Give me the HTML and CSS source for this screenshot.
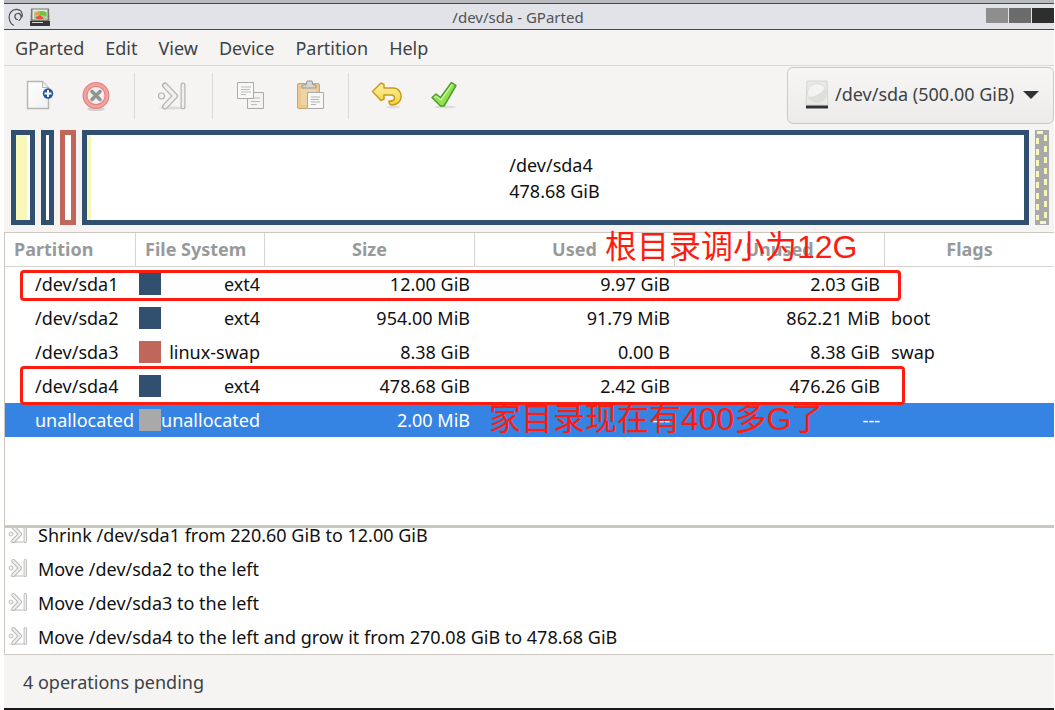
FILE: index.html
```
<!DOCTYPE html>
<html lang="en">
<head>
<meta charset="utf-8">
<title>/dev/sda - GParted</title>
<link rel="stylesheet" href="styles.css">
</head>
<body>
<svg class="defs" aria-hidden="true">
  <defs>
    <linearGradient id="paper" x1="0" y1="0" x2="1" y2="1"><stop offset="0" stop-color="#fff"/><stop offset="1" stop-color="#f0f0f0"/></linearGradient>
    <linearGradient id="gold" x1="0" y1="0" x2="0" y2="1"><stop offset="0" stop-color="#fdf3ab"/><stop offset="1" stop-color="#f3d336"/></linearGradient>
    <symbol id="move" viewBox="0 0 30 30">
      <ellipse cx="15" cy="27" rx="13" ry="1.500" fill="#dcdbd9"/>
      <g fill="none" stroke-linecap="round" stroke-linejoin="round">
        <path d="M8 4.500L18 15L8 25.500" stroke="#b4b4b2" stroke-width="6"/>
        <path d="M8 4.500L18 15L8 25.500" stroke="#efefee" stroke-width="3.400"/>
        <path d="M26 4v22" stroke="#b4b4b2" stroke-width="5"/>
        <path d="M26 4v22" stroke="#efefee" stroke-width="2.600"/>
      </g>
      <circle cx="4.500" cy="15" r="3" fill="#f2f2f1" stroke="#b4b4b2" stroke-width="1.200"/>
    </symbol>
  </defs>
</svg>
<div class="window">
  <header class="titlebar">
    <svg class="swirl" width="16" height="18" viewBox="0 0 16 18" fill="none" stroke="#4c4f52" stroke-linecap="round"><path d="M9.500 11.500C6 11 6 6 9.500 5.500c4-.5 5 5 1.500 7M14 9C15 4 12 1 8 1.300 3 1.700.8 6 1.200 10c.4 3.500 2 6 4.300 7.200" stroke-width="1.200"/></svg>
    <svg width="20" height="18" viewBox="0 0 20 18"><path d="M1 .5h18l.5 13H.5z" fill="#777b72"/><path d="M2.500 1.500h15v10h-15z" fill="#e8ebdf"/><path d="M4 3.500h13v8H4z" fill="#b5c9a0"/><path d="M10 7V3.500C13 2 17 4 16.500 8z" fill="#63c936"/><path d="M10 7H5c0-2 2-4 5-4z" fill="#ee9b4d"/><path d="M10 7l4 3.500c-3 1.500-7 1-9-1z" fill="#e64f43"/><path d="M0 13h20v5H0z" fill="#343638"/><path d="M2 14.500h11" stroke="#d2d4d2"/></svg>
    <h1>/dev/sda - GParted</h1>
    <div class="controls">
      <button class="min" aria-label="Minimize"></button><button class="max" aria-label="Maximize"></button><button class="close" aria-label="Close"></button>
    </div>
  </header>

  <nav class="menubar">
    <button>GParted</button><button>Edit</button><button>View</button><button>Device</button><button>Partition</button><button>Help</button>
  </nav>

  <div class="toolbar">
    <div class="tools">
      <button aria-label="New"><svg width="30" height="32" viewBox="0 0 30 32"><path d="M3.500 1.500h15l6 6v21h-21z" fill="url(#paper)" stroke="#b5b5b3" stroke-width="1.400"/><path d="M18.500 1.500v6h6" fill="#eee" stroke="#b5b5b3"/><circle cx="24" cy="13.500" r="5.200" fill="#2458a0"/><path d="M24 10v7M20.500 13.500h7" stroke="#fff" stroke-width="1.800"/></svg></button>
      <button aria-label="Delete"><svg width="30" height="32" viewBox="0 0 30 32"><ellipse cx="15" cy="29" rx="9" ry="2" fill="#d3d1cf"/><circle cx="15" cy="15.500" r="11" fill="#f1efee" stroke="#e58583" stroke-width="5"/><circle cx="15" cy="15.500" r="11" fill="none" stroke="#f1a3a0" stroke-width="2.500"/><path d="M11 11.500l8 8m0-8l-8 8" stroke="#929492" stroke-width="3.600" stroke-linecap="round"/></svg></button>
    </div>
    <div class="tools">
      <button aria-label="Resize/Move"><svg width="30" height="30"><use href="#move"/></svg></button>
    </div>
    <div class="tools">
      <button aria-label="Copy"><svg width="30" height="32" viewBox="0 0 30 32" stroke="#a9aaa9"><path d="M12.500 12.500h16v16h-16z" fill="#f3f3f2"/><path d="M19 18h6M16 21.500h9M16 24.500h6" stroke="#bbb"/><path d="M2.500 2.500h16v16h-16z" fill="#f8f8f7"/><path d="M6 7h10M6 9.500h9M6 12h10M6 14.500h5" stroke="#bbb"/></svg></button>
      <button aria-label="Paste"><svg width="30" height="32" viewBox="0 0 30 32"><rect x="2.500" y="3.500" width="22" height="25" rx="1.500" fill="#ecc990" stroke="#caa66e"/><path d="M6 6h15v19H6z" fill="#edd3a6"/><path d="M7 8V5h4l1-4h5l1 4h3v3z" fill="#d4d5d4" stroke="#979997"/><path d="M12.500 12.500h16v16h-16z" fill="#f7f7f6" stroke="#a9aaa9"/><path d="M16 17h9M16 19.500h8M16 22h9M16 24.500h5" stroke="#b5b5b5"/></svg></button>
    </div>
    <div class="tools">
      <button aria-label="Undo"><svg width="32" height="32" viewBox="0 0 32 32"><ellipse cx="22" cy="27" rx="7" ry="1.500" fill="#e0dfdd"/><path d="M1.500 11.500L10 3l3 1.500V8h9c11 0 11 17-1 17-2 0-3-1-3-4 7 1 7-6 2-6h-7v4l-3 1.500z" fill="url(#gold)" stroke="#c59b22" stroke-width="1.500" stroke-linejoin="round"/></svg></button>
      <button aria-label="Apply"><svg width="30" height="32" viewBox="0 0 30 32"><ellipse cx="16" cy="27" rx="11" ry="1.500" fill="#dddcda"/><path d="M3 17.500l4-3.500 4.500 3.500L22.500 2.500l4.500 3L15 26h-3.500z" fill="#8ee250" stroke="#539a2c" stroke-width="1.500" stroke-linejoin="round"/><path d="M5.500 17.500l1.500-1.200 5 3.700L23 4.500" fill="none" stroke="#c4f59d" stroke-width="1.400"/></svg></button>
    </div>
    <div class="device">
      <svg class="disk" width="24" height="30" viewBox="0 0 24 30"><path d="M2 1h20l1 24H1z" fill="#e9e9e7" stroke="#d6d6d3"/><circle cx="12" cy="13" r="9.500" fill="#f3f3f2" stroke="#dededb"/><path d="M3 17c6 0 13-3 17-9 4 8-1 14-8 14-5 0-8-2-9-5z" fill="#dededc"/><path d="M1 25.500h22v3H1z" fill="#303137"/></svg>
      <select aria-label="Device"><option>/dev/sda (500.00 GiB)</option></select>
      <svg class="arrow" width="16" height="8" viewBox="0 0 16 8"><path d="M0 0h16L8 8z" fill="#2e3436"/></svg>
    </div>
  </div>

  <div class="diskmap">
    <div class="part p1"><i></i></div>
    <div class="part p2"></div>
    <div class="part p3"></div>
    <div class="part p4"><i></i><p>/dev/sda4<br>478.68 GiB</p></div>
    <div class="free"></div>
  </div>

  <main class="list">
    <table>
      <colgroup><col class="c-part"><col class="c-fs"><col class="c-size"><col class="c-used"><col class="c-unused"><col></colgroup>
      <thead><tr><th class="start">Partition</th><th class="start">File System</th><th>Size</th><th>Used</th><th>Unused</th><th>Flags</th></tr></thead>
      <tbody>
        <tr><td>/dev/sda1</td><td><div class="fs"><span class="swatch ext"></span>ext4</div></td><td>12.00 GiB</td><td>9.97 GiB</td><td>2.03 GiB</td><td></td></tr>
        <tr><td>/dev/sda2</td><td><div class="fs"><span class="swatch ext"></span>ext4</div></td><td>954.00 MiB</td><td>91.79 MiB</td><td>862.21 MiB</td><td>boot</td></tr>
        <tr><td>/dev/sda3</td><td><div class="fs"><span class="swatch swap"></span>linux-swap</div></td><td>8.38 GiB</td><td>0.00 B</td><td>8.38 GiB</td><td>swap</td></tr>
        <tr><td>/dev/sda4</td><td><div class="fs"><span class="swatch ext"></span>ext4</div></td><td>478.68 GiB</td><td>2.42 GiB</td><td>476.26 GiB</td><td></td></tr>
        <tr class="selected"><td>unallocated</td><td><div class="fs"><span class="swatch none"></span>unallocated</div></td><td>2.00 MiB</td><td>---</td><td>---</td><td></td></tr>
      </tbody>
    </table>
    <div class="mark mark-root"></div>
    <div class="mark mark-home"></div>
    <p class="note note-root" lang="zh-CN">根目录调小为12G</p>
    <p class="note note-home" lang="zh-CN">家目录现在有400多G了</p>
  </main>

  <ul class="operations">
    <li><svg width="20" height="20"><use href="#move"/></svg>Shrink /dev/sda1 from 220.60 GiB to 12.00 GiB</li>
    <li><svg width="20" height="20"><use href="#move"/></svg>Move /dev/sda2 to the left</li>
    <li><svg width="20" height="20"><use href="#move"/></svg>Move /dev/sda3 to the left</li>
    <li><svg width="20" height="20"><use href="#move"/></svg>Move /dev/sda4 to the left and grow it from 270.08 GiB to 478.68 GiB</li>
  </ul>
  <footer class="status">4 operations pending</footer>
</div>
</body>
</html>
```

FILE: styles.css
```
* { box-sizing: border-box; }
body {
  margin: 0;
  padding: 0 1px 0 4px;
  background: #fff;
  color: #111;
  font: 18px/34px "Noto Sans", sans-serif;
}
p, h1, ul { margin: 0; padding: 0; }
button, select { font: inherit; color: inherit; border: 0; padding: 0; background: none; }
svg { display: block; flex: none; }
.defs { position: absolute; width: 0; height: 0; }

.window {
  display: flex;
  flex-direction: column;
  min-height: 100vh;
  background: #f5f4f3;
  border-top: 3px solid #b9babd;
  border-bottom: 2px solid #17181c;
}

.titlebar {
  display: flex;
  align-items: center;
  gap: 6px;
  height: 27px;
  padding: 0 0 0 4px;
  background: #e1e3e9;
  border-top: 1px solid #45464b;
  border-bottom: 1px solid #45464b;
}
.titlebar h1 {
  flex: 1;
  text-align: center;
  font-size: 15px;
  font-weight: 400;
  line-height: 24px;
  color: #505256;
}
.controls { display: flex; gap: 1px; }
.controls button { width: 22px; height: 15px; margin-bottom: 2px; }
.min { background: #8e8e8e; }
.max { background: #6b6b6b; }
.close { background: #2e2e2e; }

.menubar {
  display: flex;
  gap: 21px;
  height: 36px;
  padding-left: 11px;
  color: #3c4245;
  border-bottom: 1px solid #dbd8d5;
}

.toolbar { display: flex; height: 59px; color: #3c4245; }
.tools {
  display: flex;
  align-items: center;
  gap: 27px;
  height: 46px;
  margin-top: 7px;
  padding: 0 23px 0 20px;
  border-right: 1px solid #dbd9d7;
}
.tools:nth-child(2) { padding: 0 25px 0 22px; }
.tools:nth-child(3) { gap: 30px; padding: 0 23px 0 22px; }
.tools:nth-child(4) { gap: 26px; padding: 0 22px; border: 0; }

.device { position: relative; margin-left: auto; }
.device select {
  appearance: none;
  width: 267px;
  height: 57px;
  margin-top: 1px;
  padding: 0 36px 3px 47px;
  border: 1px solid #cdc7c2;
  border-radius: 6px;
  background: linear-gradient(#f7f6f5, #edebe9);
}
.disk { position: absolute; left: 18px; top: 14px; }
.arrow { position: absolute; right: 15px; top: 25px; }

.diskmap { display: flex; gap: 6px; height: 107px; padding: 5px 5px 7px 7px; }
.part { display: flex; border: 5px solid #314f6e; background: #fff; }
.part i { background: #f8f7ba; }
.p1 { width: 24px; }
.p1 i { width: 11px; }
.p2 { width: 13px; }
.p3 { width: 16px; border-color: #c1665a; }
.p4 { flex: 1; }
.p4 i { width: 4px; }
.p4 p { margin: auto; padding-right: 6px; line-height: 26px; }
.free {
  width: 14px;
  background:
    repeating-linear-gradient(#a9a9a9 0 2px, #f8f7ba 2px 8px, #a9a9a9 8px 11px) 1px 6px / 3px 84px no-repeat,
    repeating-linear-gradient(#f8f7ba 0 6px, #a9a9a9 6px 11px) 9px 5px / 3px 84px no-repeat,
    linear-gradient(#f8f7ba, #f8f7ba) 2px 1px / 6px 3px no-repeat,
    linear-gradient(#f8f7ba, #f8f7ba) 5px 91px / 6px 3px no-repeat,
    #a9a9a9;
}

.list {
  position: relative;
  flex: 1;
  background: #fff;
  border: 1px solid #cdc7c2;
  border-width: 1px 0 3px 1px;
}
table { width: 100%; table-layout: fixed; border-collapse: separate; border-spacing: 0; }
.c-part { width: 131px; }
.c-fs { width: 129px; }
.c-size { width: 210px; }
.c-used { width: 200px; }
.c-unused { width: 210px; }
th {
  height: 34px;
  padding: 0 9px;
  line-height: 33px;
  color: #979a9b;
  border-right: 1px solid #d8d4d0;
  border-bottom: 1px solid #d8d4d0;
}
th.start { text-align: left; }
th:last-child { border-right: 0; }
td { height: 34px; padding: 0 5px 0 0; text-align: right; white-space: nowrap; }
td:first-child { padding: 0 0 0 30px; text-align: left; }
td:last-child { padding-left: 6px; text-align: left; }
.fs { display: flex; align-items: center; justify-content: space-between; padding-left: 3px; }
.swatch { width: 22px; height: 22px; margin-bottom: 1px; }
.ext { background: #314f6e; }
.swap { background: #c1665a; }
.none { background: #a9a9a9; }
.selected { background: #3584e4; color: #fff; }

.mark { position: absolute; left: 15px; border: 3px solid #fc1d10; border-radius: 4px; }
.mark-root { top: 37px; width: 881px; height: 31px; }
.mark-home { top: 133px; width: 885px; height: 39px; }
.note {
  position: absolute;
  font: 32px/36px "Liberation Sans", "Noto Sans CJK SC", sans-serif;
  white-space: nowrap;
  color: #fc1d10;
}
.note-root { left: 600px; top: -4px; }
.note-home { left: 484px; top: 168px; }

.operations {
  display: flex;
  flex-direction: column;
  justify-content: flex-end;
  height: 126px;
  overflow: hidden;
  list-style: none;
  background: #fff;
  border-left: 1px solid #cdc7c2;
}
.operations li { display: flex; flex: none; align-items: center; gap: 10px; padding-left: 3px; }
.operations svg { margin-bottom: 2px; }
.status {
  height: 54px;
  padding-left: 19px;
  line-height: 54px;
  color: #3c4245;
  border-top: 1px solid #cdc7c2;
}
```
